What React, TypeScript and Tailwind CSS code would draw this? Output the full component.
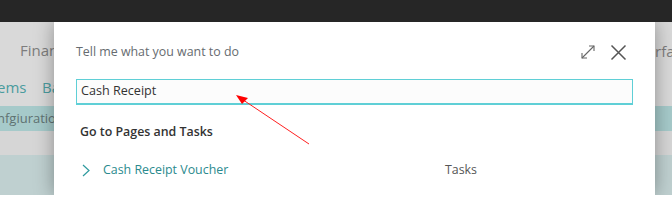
import React from "react";

export default function App() {
  const font = { fontFamily: '"Open Sans", "Noto Sans", sans-serif' };
  return (
    <div className="w-[672px] h-[207px] flex flex-col bg-white overflow-hidden" style={font}>
      <div className="h-[22px] bg-[#262626] shrink-0" />
      <div className="relative h-[173px] shrink-0 overflow-hidden">
        {/* background page (dimmed) */}
        <div className="flex flex-col h-full">
          <div className="h-[84px] bg-[#d9d9d9] relative">
            <div className="absolute left-[20px] top-[17px] text-[15px] text-[#7d7d7d]">Finan</div>
            <div className="absolute left-[655px] top-[18px] text-[15px] text-[#7d7d7d]">rfa</div>
            <div className="absolute left-[-3px] top-[54px] text-[15px] text-[#4a9c9e]">ems</div>
            <div className="absolute left-[42px] top-[54px] text-[15px] text-[#4a9c9e]">Ba</div>
          </div>
          <div className="h-[25px] bg-[#a6caca] relative">
            <div className="absolute left-[-3px] top-[3px] text-[13px] text-[#5f7272]">nfgiuration</div>
          </div>
          <div className="h-[24px] bg-[#d6d6d6]" />
          <div className="h-[40px] bg-[#bfd0d0]" />
        </div>
        {/* modal */}
        <div className="absolute left-[54px] top-0 w-[601px] h-[173px] bg-white shadow-[0_0_18px_rgba(0,0,0,0.35)] px-[22px]">
          <div className="pt-[12px] h-[48px] flex items-center justify-between">
            <span className="text-[12.4px] text-[#666b70]">Tell me what you want to do</span>
            <div className="flex items-center gap-[14px] mr-[6px]">
              <svg width="16" height="16" viewBox="0 0 16 16" fill="none" stroke="#666" strokeWidth="1.1">
                <path d="M2 14 L14 2" />
                <path d="M9 2 H14 V7" />
                <path d="M2 9 V14 H7" />
              </svg>
              <svg width="17" height="17" viewBox="0 0 17 17" fill="none" stroke="#555" strokeWidth="1.5">
                <path d="M1.5 1.5 L15.5 15.5 M15.5 1.5 L1.5 15.5" />
              </svg>
            </div>
          </div>
          <div className="mt-[9px] h-[26px] border border-b-2 border-[#5fcfd6] bg-[#fcfcfc] flex items-center pl-[4px] text-[12.6px] text-[#333]">
            Cash Receipt
          </div>
          <div className="mt-[17px] h-[20px] flex items-center pl-[4px] text-[12.4px] font-semibold text-[#333]">
            Go to Pages and Tasks
          </div>
          <div className="mt-[18px] h-[20px] flex items-center text-[12.4px]">
            <svg className="ml-[6px]" width="8" height="13" viewBox="0 0 8 13" fill="none" stroke="#2e9a9e" strokeWidth="1.2">
              <path d="M1 1 L7 6.5 L1 12" />
            </svg>
            <span className="ml-[13px] text-[#2b8a8e] w-[342px]">Cash Receipt Voucher</span>
            <span className="text-[#555]">Tasks</span>
          </div>
        </div>
        {/* red arrow annotation */}
        <svg className="absolute left-0 top-0 pointer-events-none" width="672" height="173" viewBox="0 22 672 173">
          <line x1="309" y1="144" x2="241" y2="98.5" stroke="#ff2020" strokeWidth="1" />
          <polygon points="236,95 248,98 242,104" fill="#ff0000" />
        </svg>
      </div>
      <div className="flex-1 bg-white" />
    </div>
  );
}
